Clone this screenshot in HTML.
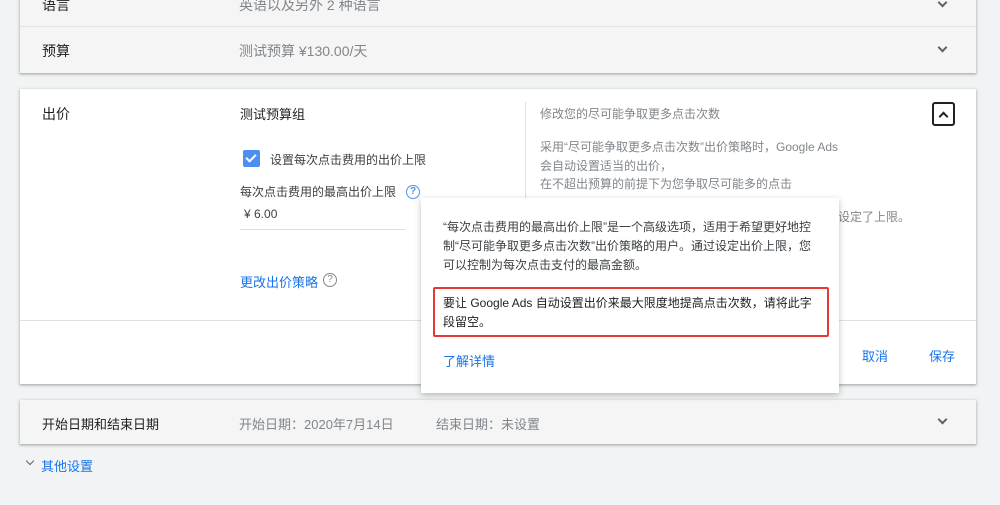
<!DOCTYPE html>
<html><head><meta charset="utf-8">
<style>
*{margin:0;padding:0;box-sizing:border-box}
body{width:1000px;height:505px;overflow:hidden;background:#f1f3f4;font-family:"Liberation Sans","Noto Sans CJK SC",sans-serif;position:relative;font-size:13px;color:#202124}
.abs{position:absolute}
.card{position:absolute;left:20px;width:956px;box-shadow:0 1px 2px rgba(60,64,67,.3),0 1px 3px 1px rgba(60,64,67,.15)}
.g{color:#80868b}
.chev{position:absolute;width:7px;height:7px;border-right:2px solid #5f6368;border-bottom:2px solid #5f6368;transform:rotate(45deg)}
.blue{color:#1a73e8}
</style></head><body>
<div class="card" style="top:-10px;height:83px;background:#f5f5f5">
  <div class="abs" style="top:36px;left:0;width:956px;border-top:1px solid #e4e4e4"></div>
  <div class="abs" style="left:22px;top:5px;font-size:14px">语言</div>
  <div class="abs g" style="left:219px;top:5px;font-size:14px">英语以及另外 2 种语言</div>
  <div class="chev" style="left:919px;top:9px"></div>
  <div class="abs" style="left:22px;top:51px;font-size:14px">预算</div>
  <div class="abs g" style="left:219px;top:51px;font-size:14px">测试预算 ¥130.00/天</div>
  <div class="chev" style="left:919px;top:54px"></div>
</div>
<div class="card" style="top:89px;height:295px;background:#fff">
  <div class="abs" style="left:22px;top:15px;font-size:14px">出价</div>
  <div class="abs" style="left:220px;top:15px;font-size:13px">测试预算组</div>
  <div class="abs" style="left:223px;top:61px;width:17px;height:17px;background:#4d8ff0;border-radius:2px"></div>
  <div class="abs" style="left:228px;top:63px;width:6px;height:10px;border-right:2px solid #fff;border-bottom:2px solid #fff;transform:rotate(45deg)"></div>
  <div class="abs" style="left:250px;top:62px;color:#3c4043;font-size:12px">设置每次点击费用的出价上限</div>
  <div class="abs" style="left:220px;top:94px;color:#3c4043;font-size:12px">每次点击费用的最高出价上限</div>
  <div class="abs" style="left:386px;top:96px;width:14px;height:14px;border:1.5px solid #4d8ff0;border-radius:50%;color:#4d8ff0;font-size:10px;text-align:center;line-height:11px;font-weight:bold">?</div>
  <div class="abs" style="left:224px;top:118px;color:#3c4043;font-size:12px">¥ 6.00</div>
  <div class="abs" style="left:220px;top:140px;width:165px;border-top:1px solid #dadce0"></div>
  <div class="abs blue" style="left:220px;top:183px">更改出价策略</div>
  <div class="abs" style="left:303px;top:184px;width:14px;height:14px;border:1.3px solid #80868b;border-radius:50%;color:#80868b;font-size:10px;text-align:center;line-height:12px">?</div>
  <div class="abs" style="left:505px;top:13px;height:110px;border-left:1px solid #e0e0e0"></div>
  <div class="abs g" style="left:520px;top:16px;font-size:12px">修改您的尽可能争取更多点击次数</div>
  <div class="abs g" style="left:520px;top:49px;font-size:12px;line-height:18.5px">采用“尽可能争取更多点击次数”出价策略时，Google Ads<br>会自动设置适当的出价，<br>在不超出预算的前提下为您争取尽可能多的点击</div>
  <div class="abs g" style="left:640px;top:119px;font-size:12px;white-space:nowrap;width:250px;text-align:right">每次点击费用的最高出价设定了上限。</div>
  <div class="abs" style="left:912px;top:13px;width:23px;height:24px;border:2px solid #202124;border-radius:3px"></div>
  <div class="abs" style="left:920px;top:24px;width:7px;height:7px;border-left:2px solid #202124;border-top:2px solid #202124;transform:rotate(45deg)"></div>
  <div class="abs" style="left:0;top:231px;width:956px;border-top:1px solid #e0e0e0"></div>
  <div class="abs blue" style="left:842px;top:257px">取消</div>
  <div class="abs blue" style="left:909px;top:257px">保存</div>
</div>
<div class="card" style="top:400px;height:44px;background:#f5f5f5">
  <div class="abs" style="left:22px;top:14px">开始日期和结束日期</div>
  <div class="abs g" style="left:219px;top:14px">开始日期：2020年7月14日</div>
  <div class="abs g" style="left:416px;top:14px">结束日期：未设置</div>
  <div class="chev" style="left:919px;top:16px"></div>
</div>
<div class="chev" style="left:27px;top:458px;width:6px;height:6px;border-width:1.5px"></div>
<div class="abs blue" style="left:41px;top:456px;font-size:13px">其他设置</div>
<div class="abs" style="left:421px;top:198px;width:418px;height:195px;background:#fff;box-shadow:0 2px 6px rgba(0,0,0,.25)">
  <div class="abs" style="left:22px;top:20px;width:372px;font-size:12px;line-height:19px;color:#3c4043">“每次点击费用的最高出价上限”是一个高级选项，适用于希望更好地控制“尽可能争取更多点击次数”出价策略的用户。通过设定出价上限，您可以控制为每次点击支付的最高金额。</div>
  <div class="abs" style="left:12px;top:89px;width:396px;height:50px;border:2px solid #e53935;border-radius:2px"></div>
  <div class="abs" style="left:22px;top:96px;width:376px;font-size:12px;line-height:19px;color:#202124">要让 Google Ads 自动设置出价来最大限度地提高点击次数，请将此字段留空。</div>
  <div class="abs blue" style="left:22px;top:153px;font-size:13px">了解详情</div>
</div>
</body></html>
